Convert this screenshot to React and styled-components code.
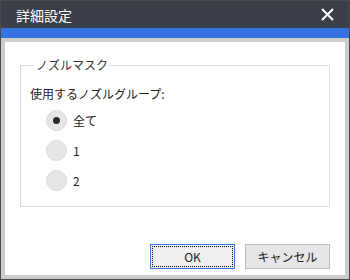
import styled, { createGlobalStyle } from "styled-components";
import { useState } from "react";

const GlobalStyle = createGlobalStyle`
  html, body {
    margin: 0;
    padding: 0;
    background: #ffffff;
  }
  * {
    box-sizing: border-box;
  }
`;

const groups = ["全て", "1", "2"];

export default function App() {
  const [selected, setSelected] = useState(0);

  return (
    <>
      <GlobalStyle />
      <Window>
        <TitleBar>
          <Title>詳細設定</Title>
          <CloseButton aria-label="閉じる">
            <svg width="13" height="13" viewBox="0 0 13 13">
              <path d="M1 1 L12 12 M12 1 L1 12" stroke="#ffffff" strokeWidth="2" />
            </svg>
          </CloseButton>
        </TitleBar>
        <Accent />
        <Frame>
          <Panel>
            <Group>
              <Legend>ノズルマスク</Legend>
              <Caption>使用するノズルグループ:</Caption>
              <RadioList>
                {groups.map((label, i) => (
                  <RadioRow key={label} onClick={() => setSelected(i)}>
                    <RadioCircle>{selected === i && <RadioDot />}</RadioCircle>
                    <RadioLabel>{label}</RadioLabel>
                  </RadioRow>
                ))}
              </RadioList>
            </Group>
            <ButtonRow>
              <Button primary>OK</Button>
              <Button>キャンセル</Button>
            </ButtonRow>
          </Panel>
        </Frame>
      </Window>
    </>
  );
}

const Window = styled.div`
  width: 350px;
  height: 280px;
  border: 1px solid #4b4b4b;
  display: flex;
  flex-direction: column;
  background: #cccccc;
  font-family: "Noto Sans CJK JP", "Noto Sans", sans-serif;
  color: #222222;
`;

const TitleBar = styled.div`
  height: 27px;
  background: #3b3f4a;
  display: flex;
  align-items: center;
  justify-content: space-between;
  padding: 0 15px 0 15px;
`;

const Title = styled.div`
  color: #ffffff;
  font-size: 14px;
  line-height: 1;
`;

const CloseButton = styled.div`
  display: flex;
  align-items: center;
  width: 13px;
  height: 13px;
`;

const Accent = styled.div`
  height: 10px;
  background: #3574e0;
`;

const Frame = styled.div`
  flex: 1;
  padding: 4px;
  display: flex;
`;

const Panel = styled.div`
  flex: 1;
  background: #ffffff;
  display: flex;
  flex-direction: column;
  padding: 15px 15px 6px 15px;
`;

const Group = styled.fieldset`
  margin: 0;
  height: 150px;
  border: 1px solid #dcdcdc;
  padding: 4px 9px 0 9px;
  min-width: 0;
`;

const Legend = styled.legend`
  font-size: 12px;
  padding: 0 2px;
  margin-left: 4px;
  color: #333333;
  line-height: 16px;
`;

const Caption = styled.div`
  font-size: 12px;
  line-height: 16px;
  margin-top: 9px;
`;

const RadioList = styled.div`
  display: flex;
  flex-direction: column;
  gap: 9px;
  margin-top: 8px;
  padding-left: 16px;
`;

const RadioRow = styled.div`
  display: flex;
  align-items: center;
  gap: 6px;
  height: 21px;
  cursor: pointer;
`;

const RadioCircle = styled.div`
  width: 21px;
  height: 21px;
  border-radius: 50%;
  background: #e6e6e6;
  border: 1px solid #dadada;
  display: flex;
  align-items: center;
  justify-content: center;
`;

const RadioDot = styled.div`
  width: 7px;
  height: 7px;
  border-radius: 50%;
  background: #252a33;
`;

const RadioLabel = styled.span`
  font-size: 12px;
`;

const ButtonRow = styled.div`
  margin-top: auto;
  display: flex;
  justify-content: flex-end;
  gap: 10px;
`;

const Button = styled.button`
  width: 85px;
  height: 25px;
  font-family: inherit;
  font-size: 12px;
  color: #222222;
  background: ${(p) => (p.primary ? "#efefef" : "#e6e6e6")};
  border: 1px solid ${(p) => (p.primary ? "#3574e0" : "#bdbdbd")};
  outline: ${(p) => (p.primary ? "1px dotted #111111" : "none")};
  outline-offset: -3px;
  padding: 0;
`;
